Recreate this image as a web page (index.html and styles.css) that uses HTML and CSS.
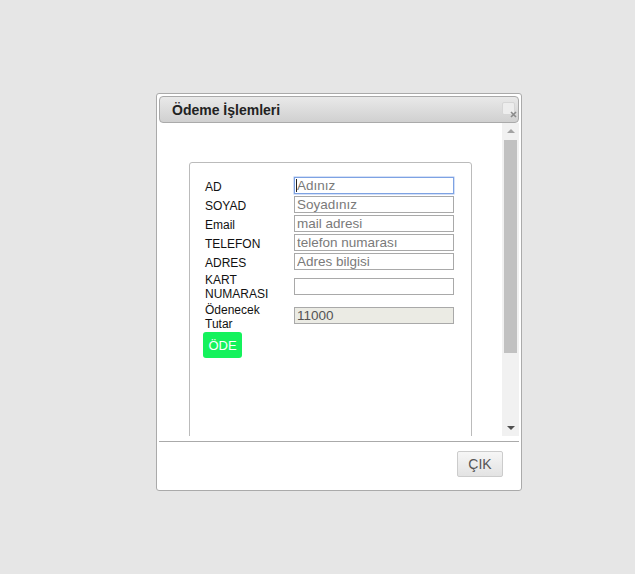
FILE: index.html
```html
<!DOCTYPE html>
<html lang="tr">
<head>
<meta charset="utf-8">
<title>Ödeme İşlemleri</title>
<link rel="stylesheet" href="styles.css">
</head>
<body>
<div class="dialog">
  <div class="titlebar">
    <span class="title">Ödeme İşlemleri</span>
    <span class="close">
      <svg class="close-x" width="7" height="7" viewBox="0 0 7 7"><path d="M1 1L6 6M6 1L1 6" stroke="#8a8a8a" stroke-width="1.6"/></svg>
    </span>
  </div>
  <div class="content-wrap">
    <div class="content">
      <div class="panel">
        <table class="form">
          <tr><td class="lbl">AD</td><td><span class="focus-wrap"><input class="inp focused" type="text" placeholder="Adınız"><span class="caret"></span></span></td></tr>
          <tr><td class="lbl">SOYAD</td><td><input class="inp" type="text" placeholder="Soyadınız"></td></tr>
          <tr><td class="lbl">Email</td><td><input class="inp" type="text" placeholder="mail adresi"></td></tr>
          <tr><td class="lbl">TELEFON</td><td><input class="inp" type="text" placeholder="telefon numarası"></td></tr>
          <tr><td class="lbl">ADRES</td><td><input class="inp" type="text" placeholder="Adres bilgisi"></td></tr>
          <tr><td class="lbl">KART<br>NUMARASI</td><td><input class="inp" type="text"></td></tr>
          <tr><td class="lbl">Ödenecek<br>Tutar</td><td><input class="inp disabled" type="text" value="11000" disabled></td></tr>
          <tr><td colspan="2"><button class="pay">ÖDE</button></td></tr>
        </table>
      </div>
    </div>
    <div class="scrollbar">
      <div class="arrow up"></div>
      <div class="track"><div class="thumb"></div></div>
      <div class="arrow down"></div>
    </div>
  </div>
  <div class="buttonpane">
    <button class="btn">ÇIK</button>
  </div>
</div>
</body>
</html>
```
FILE: styles.css
```css
html, body {
  margin: 0;
  padding: 0;
  background: #e6e6e6;
  font-family: "Liberation Sans", Arial, sans-serif;
}

.dialog {
  box-sizing: border-box;
  margin: 93px 0 0 156px;
  width: 366px;
  height: 398px;
  border: 1px solid #aaaaaa;
  border-radius: 3px;
  background: #ffffff;
  padding: 2px;
  display: flex;
  flex-direction: column;
}

.titlebar {
  position: relative;
  box-sizing: border-box;
  height: 27px;
  border: 1px solid #aaaaaa;
  border-radius: 4px;
  background: linear-gradient(#e9e9e9, #d0d0d0);
  display: flex;
  align-items: center;
  padding-left: 12px;
}

.title {
  font-weight: bold;
  font-size: 14px;
  color: #222222;
  padding-top: 1px;
}

.close {
  position: absolute;
  right: 3px;
  top: 5px;
  width: 11px;
  height: 11px;
  border: 1px solid #d6d6d6;
  border-radius: 2px;
  background: #ededed;
}

.close-x {
  position: absolute;
  left: 7px;
  top: 8px;
}

.content-wrap {
  display: flex;
  height: 313px;
}

.content {
  flex: 1;
  overflow: hidden;
  padding: 39px 30px 0 30px;
}

.panel {
  box-sizing: border-box;
  height: 340px;
  border: 1px solid #bbbbbb;
  border-radius: 3px 3px 0 0;
  padding: 13px 0 0 13px;
}

.form {
  border-collapse: separate;
  border-spacing: 0;
  font-size: 12px;
  line-height: 14px;
  color: #111111;
}

.form td {
  padding: 1px 0;
  vertical-align: middle;
}

.form td.lbl {
  width: 89px;
  padding: 2px 0 0 2px;
}

.inp {
  box-sizing: border-box;
  width: 160px;
  height: 17px;
  margin: 0;
  border: 1px solid #a9a9a9;
  padding: 0 2px;
  font-family: "Liberation Sans", Arial, sans-serif;
  font-size: 13.5px;
  color: #222222;
  background: #ffffff;
  outline: none;
  display: block;
}

.inp::placeholder {
  color: #7a7a7a;
}

.inp.focused {
  border-color: #7da2e3;
  box-shadow: 0 0 0 0.5px #a9c2ef;
}

.focus-wrap {
  position: relative;
  display: block;
}

.caret {
  position: absolute;
  left: 2px;
  top: 2px;
  width: 1px;
  height: 13px;
  background: #222222;
}

.inp.disabled {
  background: #ebebe4;
  color: #545454;
  border-color: #a9a9a9;
  margin-top: -2px;
}

.pay {
  margin: 0;
  width: 39px;
  height: 26px;
  border: none;
  border-radius: 3px;
  background: #14f25c;
  color: #ffffff;
  font-family: "Liberation Sans", Arial, sans-serif;
  font-size: 13px;
  padding: 0;
}

.scrollbar {
  width: 17px;
  background: #f1f1f1;
  display: flex;
  flex-direction: column;
}

.arrow {
  height: 17px;
  position: relative;
}

.arrow::after {
  content: "";
  position: absolute;
  left: 5px;
  width: 0;
  height: 0;
  border-left: 4px solid transparent;
  border-right: 4px solid transparent;
}

.arrow.up::after {
  top: 6px;
  border-bottom: 4px solid #a3a3a3;
}

.arrow.down::after {
  top: 7px;
  border-top: 4px solid #505050;
}

.track {
  flex: 1;
  padding: 0 2px;
}

.thumb {
  height: 213px;
  background: #c1c1c1;
}

.buttonpane {
  margin-top: 5px;
  border-top: 1px solid #aaaaaa;
  padding: 9px 16px 0 0;
  display: flex;
  justify-content: flex-end;
}

.btn {
  box-sizing: border-box;
  width: 46px;
  height: 26px;
  border: 1px solid #cccccc;
  border-radius: 2px;
  background: linear-gradient(#f6f6f6, #e3e3e3);
  color: #555555;
  font-family: "Liberation Sans", Arial, sans-serif;
  font-size: 14px;
  padding: 0;
}
```
